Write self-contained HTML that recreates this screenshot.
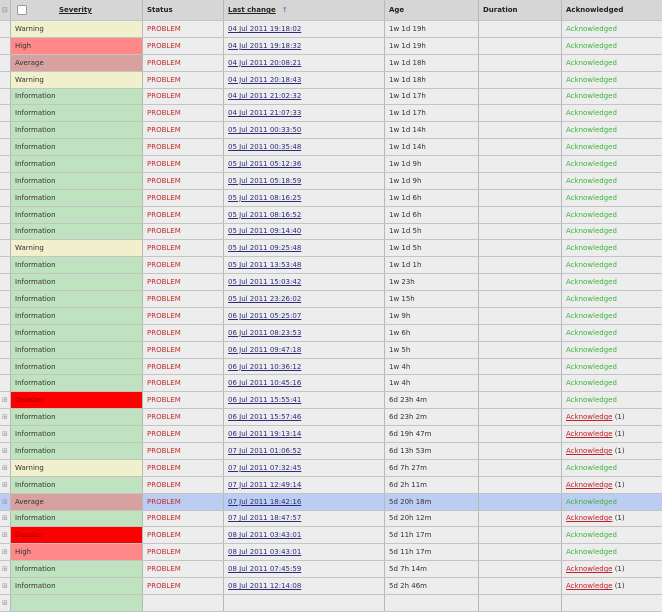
<!DOCTYPE html>
<html><head><meta charset="utf-8"><style>
*{margin:0;padding:0;box-sizing:border-box}
body{width:662px;height:600px;overflow:hidden;background:#eee;font-family:"DejaVu Sans","Liberation Sans",sans-serif;font-size:7px;color:#333}
.r{position:absolute;left:0;width:662px;display:flex;border-bottom:1px solid #c4c4c4;background:#ededed}
.c{height:100%;border-right:1px solid #b8b8b8;display:flex;align-items:center;padding-left:4px;white-space:nowrap;overflow:hidden}
.c0{width:11px;padding-left:2px;color:#999}
.c1{width:132px}
.c2{width:81px;color:#c0302a}
.c3{width:161px}
.c4{width:94px}
.c5{width:83px}
.c6{width:100px;border-right:none}
.h{background:#d6d6d6;font-weight:bold;color:#222;top:0;height:21px}
a{color:#2c2c7a;text-decoration:underline}
.ok{color:#3ab53a}
.ak{color:#c0202a;text-decoration:underline}
.W{background:#f1f0cc}.H{background:#ff8888}.A{background:#d9a0a0}.I{background:#bfe2bf}.D{background:#ff0000}
.hl{background:#bccdf3}
.cb{width:10px;height:10px;border:1px solid #999;border-radius:2px;background:#fff;margin-left:6px}
</style></head><body>
<div class="r h"><div class="c c0">⊟</div><div class="c c1" style="padding-left:0"><div class="cb"></div><span style="margin-left:32px;text-decoration:underline">Severity</span></div><div class="c c2" style="color:#222">Status</div><div class="c c3"><span style="text-decoration:underline">Last change</span><span style="color:#6a7fc0;margin-left:6px">↑</span></div><div class="c c4">Age</div><div class="c c5">Duration</div><div class="c c6">Acknowledged</div></div>
<div id="rows"></div>
<script>
var d=[["W","04 Jul 2011 19:18:02","1w 1d 19h",0],["H","04 Jul 2011 19:18:32","1w 1d 19h",0],["A","04 Jul 2011 20:08:21","1w 1d 18h",0],["W","04 Jul 2011 20:18:43","1w 1d 18h",0],["I","04 Jul 2011 21:02:32","1w 1d 17h",0],["I","04 Jul 2011 21:07:33","1w 1d 17h",0],["I","05 Jul 2011 00:33:50","1w 1d 14h",0],["I","05 Jul 2011 00:35:48","1w 1d 14h",0],["I","05 Jul 2011 05:12:36","1w 1d 9h",0],["I","05 Jul 2011 05:18:59","1w 1d 9h",0],["I","05 Jul 2011 08:16:25","1w 1d 6h",0],["I","05 Jul 2011 08:16:52","1w 1d 6h",0],["I","05 Jul 2011 09:14:40","1w 1d 5h",0],["W","05 Jul 2011 09:25:48","1w 1d 5h",0],["I","05 Jul 2011 13:53:48","1w 1d 1h",0],["I","05 Jul 2011 15:03:42","1w 23h",0],["I","05 Jul 2011 23:26:02","1w 15h",0],["I","06 Jul 2011 05:25:07","1w 9h",0],["I","06 Jul 2011 08:23:53","1w 6h",0],["I","06 Jul 2011 09:47:18","1w 5h",0],["I","06 Jul 2011 10:36:12","1w 4h",0],["I","06 Jul 2011 10:45:16","1w 4h",0],["D","06 Jul 2011 15:55:41","6d 23h 4m",2],["I","06 Jul 2011 15:57:46","6d 23h 2m",1],["I","06 Jul 2011 19:13:14","6d 19h 47m",1],["I","07 Jul 2011 01:06:52","6d 13h 53m",1],["W","07 Jul 2011 07:32:45","6d 7h 27m",2],["I","07 Jul 2011 12:49:14","6d 2h 11m",1],["A","07 Jul 2011 18:42:16","5d 20h 18m",3],["I","07 Jul 2011 18:47:57","5d 20h 12m",1],["D","08 Jul 2011 03:43:01","5d 11h 17m",2],["H","08 Jul 2011 03:43:01","5d 11h 17m",2],["I","08 Jul 2011 07:45:59","5d 7h 14m",1],["I","08 Jul 2011 12:14:08","5d 2h 46m",1],["I","","",1]];
var N={W:"Warning",H:"High",A:"Average",I:"Information",D:"Disaster"},h="";
d.forEach(function(r,i){var t=21+i*16.88,k=r[3];
h+='<div class="r'+(k==3?' hl':'')+'" style="top:'+t+'px;height:16.88px"><div class="c c0">'+(k?'⊞':'')+'</div><div class="c c1 '+r[0]+'"'+(r[0]=="D"?' style="color:#900"':'')+'>'+(r[1]?N[r[0]]:'')+'</div><div class="c c2">'+(r[1]?'PROBLEM':'')+'</div><div class="c c3"><a>'+r[1]+'</a></div><div class="c c4">'+r[2]+'</div><div class="c c5"></div><div class="c c6">'+(!r[1]?'':k==1?'<span class="ak">Acknowledge</span>&nbsp;(1)':'<span class="ok">Acknowledged</span>')+'</div></div>';});
document.getElementById("rows").innerHTML=h;
</script>
</body></html>
